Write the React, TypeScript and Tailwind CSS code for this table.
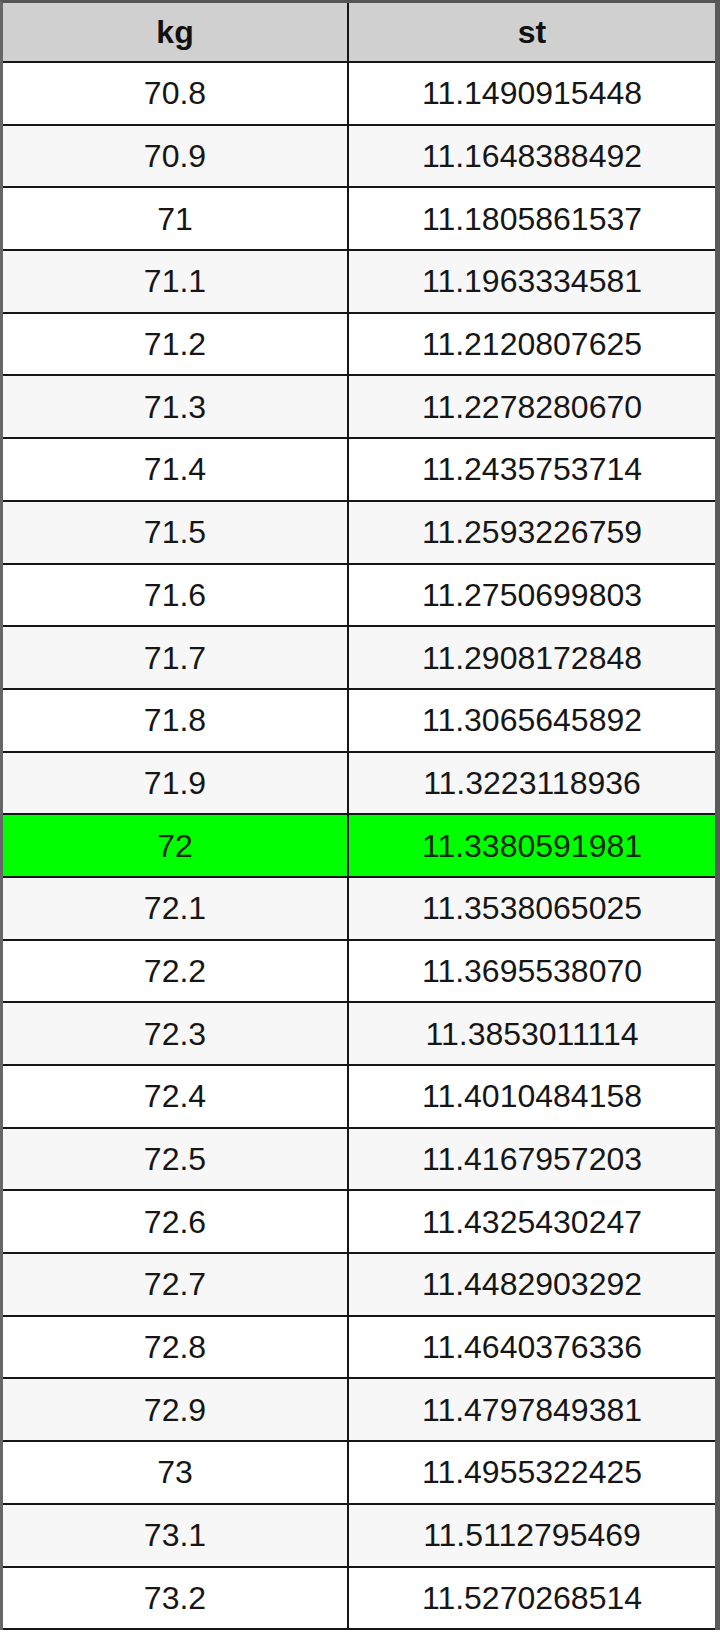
const rows: [string, string][] = [
  ["70.8", "11.1490915448"],
  ["70.9", "11.1648388492"],
  ["71", "11.1805861537"],
  ["71.1", "11.1963334581"],
  ["71.2", "11.2120807625"],
  ["71.3", "11.2278280670"],
  ["71.4", "11.2435753714"],
  ["71.5", "11.2593226759"],
  ["71.6", "11.2750699803"],
  ["71.7", "11.2908172848"],
  ["71.8", "11.3065645892"],
  ["71.9", "11.3223118936"],
  ["72", "11.3380591981"],
  ["72.1", "11.3538065025"],
  ["72.2", "11.3695538070"],
  ["72.3", "11.3853011114"],
  ["72.4", "11.4010484158"],
  ["72.5", "11.4167957203"],
  ["72.6", "11.4325430247"],
  ["72.7", "11.4482903292"],
  ["72.8", "11.4640376336"],
  ["72.9", "11.4797849381"],
  ["73", "11.4955322425"],
  ["73.1", "11.5112795469"],
  ["73.2", "11.5270268514"],
];

export default function App() {
  return (
    <div className="w-[720px] min-h-[1636px] bg-white font-['Liberation_Sans',Arial,sans-serif]">
      <div className="border-t-[3px] border-l-[3px] border-r-[5px] border-t-[#555555] border-l-[#666666] border-r-[#5a5a5a]">
        <div className="flex h-[60px] border-b-2 border-[#161616] bg-[#d0d0d0] text-[32px] font-bold text-[#111111]">
          <div className="w-[346px] flex items-center justify-center border-r-2 border-[#161616]">kg</div>
          <div className="flex-1 flex items-center justify-center">st</div>
        </div>
        {rows.map(([kg, st], i) => {
          const hit = kg === "72";
          const bg = hit ? "bg-[#00ff00] text-[#0f2a0f]" : i % 2 === 0 ? "bg-white text-[#161616]" : "bg-[#f7f7f7] text-[#161616]";
          return (
            <div key={kg} className={`flex h-[62.7px] border-b-2 border-[#161616] text-[32px] ${bg}`}>
              <div className="w-[346px] flex items-center justify-center border-r-2 border-[#161616]">{kg}</div>
              <div className="flex-1 flex items-center justify-center">{st}</div>
            </div>
          );
        })}
      </div>
    </div>
  );
}
